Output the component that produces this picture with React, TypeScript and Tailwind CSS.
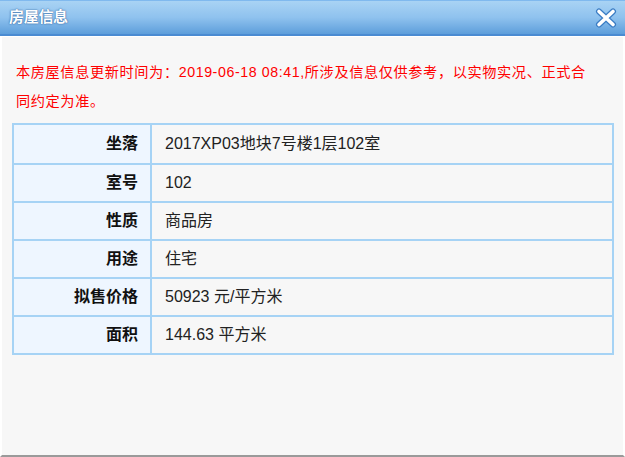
const ROWS: { label: string; value: string }[] = [
  { label: '坐落', value: '2017XP03地块7号楼1层102室' },
  { label: '室号', value: '102' },
  { label: '性质', value: '商品房' },
  { label: '用途', value: '住宅' },
  { label: '拟售价格', value: '50923 元/平方米' },
  { label: '面积', value: '144.63 平方米' },
];

const FONT = '"Liberation Sans", "Noto Sans CJK SC", sans-serif';

function CloseIcon() {
  return (
    <svg width="22" height="20" viewBox="0 0 22 20" fill="none">
      <path d="M4 3.5 L18 16.5 M18 3.5 L4 16.5" stroke="#3a7cc4" strokeWidth="6" strokeLinecap="round" />
      <path d="M4 3.5 L18 16.5 M18 3.5 L4 16.5" stroke="#ffffff" strokeWidth="3.6" strokeLinecap="round" />
    </svg>
  );
}

export default function App() {
  return (
    <div className="w-[625px] h-[457px] flex flex-col bg-[#f7f7f7] overflow-hidden" style={{ fontFamily: FONT }}>
      {/* Title bar */}
      <div className="h-[36px] shrink-0 flex items-center justify-between pl-[9px] pr-[8px] border-t border-[#80b9ee] border-b-2 border-b-[#4a8bd2] bg-gradient-to-b from-[#a9d3f4] via-[#8fc2ee] to-[#5d9edb]">
        <span className="text-white text-[15px] font-bold tracking-[-0.3px] [text-shadow:0_0_2px_#3b6ea8,0_0_1px_#3b6ea8]">
          房屋信息
        </span>
        <CloseIcon />
      </div>
      <div className="h-px bg-white shrink-0" />

      {/* Body */}
      <div className="flex-1 flex flex-col pl-[10px] pr-[10px] border-l-2 border-r-2 border-white border-b-2 border-b-[#9a9a9a]">
        <p className="w-[586px] text-[#ff0000] text-[14.2px] tracking-[0.6px] leading-[29px] pt-[21px] pl-[4px]">
          本房屋信息更新时间为：2019-06-18 08:41,所涉及信息仅供参考，以实物实况、正式合同约定为准。
        </p>
        <div className="mt-[7px] w-[602px] border-2 border-[#a6d3f5] text-[16px]">
          {ROWS.map((r, i) => (
            <div
              key={r.label}
              className={`flex h-[38px] ${i > 0 ? 'border-t-2 border-[#a6d3f5]' : ''}`}
            >
              <div className="w-[138px] shrink-0 flex items-center justify-end pr-[12px] bg-[#eef6ff] border-r-2 border-[#a6d3f5] font-bold text-[#111]">
                {r.label}
              </div>
              <div className="flex-1 flex items-center pl-[13px] text-[#222]">{r.value}</div>
            </div>
          ))}
        </div>
      </div>
    </div>
  );
}
